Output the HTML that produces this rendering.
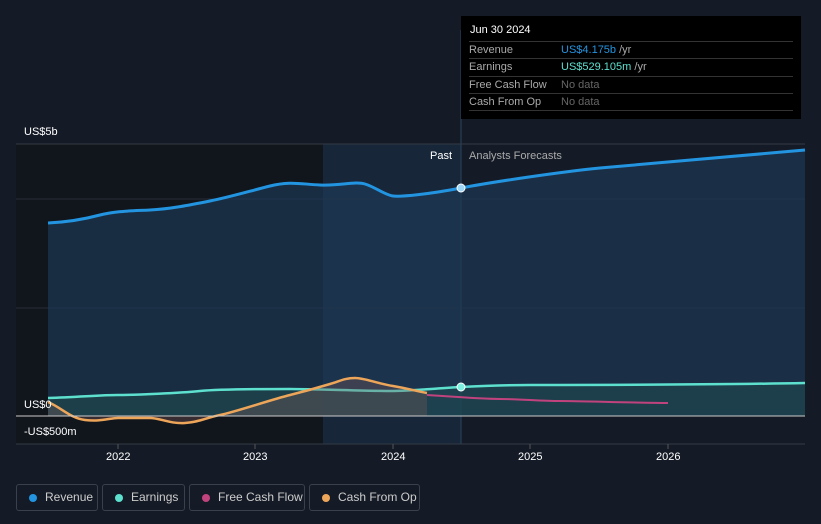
<!DOCTYPE html><html><head><style>
html,body{margin:0;width:821px;height:524px;overflow:hidden}
body{background:#151b26;font-family:"Liberation Sans",sans-serif;position:relative}
.t{position:absolute;font-size:11px;color:#fff}
.tip{position:absolute;left:461px;top:16px;width:340px;height:103px;background:#000}
.row{position:absolute;left:8px;width:324px;border-top:1px solid #333;font-size:11px;color:#aaa;height:17px;line-height:17px}
.row span{position:absolute;left:92px}
.leg{position:absolute;top:484px;height:27px;border:1px solid #3a404c;border-radius:3px;font-size:12px;color:#ccc;line-height:25px;box-sizing:border-box;padding-left:28px;white-space:nowrap}
.leg i{position:absolute;left:12px;top:9px;width:8px;height:8px;border-radius:50%}
</style></head><body>
<svg width="821" height="524" style="position:absolute;left:0;top:0">
<rect x="16" y="144" width="307" height="300" fill="#11151c"/>
<rect x="323" y="144" width="138" height="300" fill="#172638"/>
<line x1="461" y1="30" x2="461" y2="444" stroke="#2a4460"/>
<line x1="16" y1="144" x2="805" y2="144" stroke="#333a45"/>
<line x1="16" y1="199" x2="805" y2="199" stroke="#262d38"/>
<line x1="16" y1="308" x2="805" y2="308" stroke="#262d38"/>
<line x1="16" y1="444" x2="805" y2="444" stroke="#333a45"/>
<path d="M48,223 C70,222 85,219 100,215 S130,211 150,210 S190,205 210,201 S250,191 270,186 S300,184 320,185 S355,181 365,184 S385,195 393,196 S430,194 461,188 S560,172 600,168 S700,159 805,150 L805,416 L48,416Z" fill="#1d3a57" opacity="0.65"/>
<path d="M48,223 C70,222 85,219 100,215 S130,211 150,210 S190,205 210,201 S250,191 270,186 S300,184 320,185 S355,181 365,184 S385,195 393,196 S430,194 461,188 S560,172 600,168 S700,159 805,150" fill="none" stroke="#2394e0" stroke-width="3"/>
<path d="M48,398 C80,397 100,395 118,395 S180,393 200,391 S270,389 290,389 S370,391 390,391 S440,388 461,387 S510,385 530,385 S700,385 805,383 L805,416 L48,416Z" fill="#1f4b50" opacity="0.6"/>
<path d="M48,398 C80,397 100,395 118,395 S180,393 200,391 S270,389 290,389 S370,391 390,391 S440,388 461,387 S510,385 530,385 S700,385 805,383" fill="none" stroke="#5ee0cf" stroke-width="2.5"/>
<path d="M427,395 C460,397 480,399 500,399 S540,401 560,401 S640,403 668,403" fill="none" stroke="#c0437e" stroke-width="2"/>
<path d="M48,402 C62,408 70,418 85,420 S110,418 118,418 S140,418 150,418 S170,424 185,423 S205,418 220,415 S270,400 290,395 S320,387 330,384 S345,378 355,378 S375,383 393,386 S415,391 427,393 L427,416 L48,416Z" fill="#7a5a5a" opacity="0.35"/>
<path d="M48,402 C62,408 70,418 85,420 S110,418 118,418 S140,418 150,418 S170,424 185,423 S205,418 220,415 S270,400 290,395 S320,387 330,384 S345,378 355,378 S375,383 393,386 S415,391 427,393" fill="none" stroke="#eda55a" stroke-width="2.5"/>
<line x1="16" y1="416" x2="805" y2="416" stroke="#ccc" stroke-width="1"/>
<circle cx="461" cy="188" r="4" fill="#9fd6f5" stroke="#fff"/>
<circle cx="461" cy="387" r="4" fill="#7ef0df" stroke="#fff"/>
<line x1="118" y1="444" x2="118" y2="449" stroke="#555"/><line x1="255" y1="444" x2="255" y2="449" stroke="#555"/><line x1="393" y1="444" x2="393" y2="449" stroke="#555"/><line x1="530" y1="444" x2="530" y2="449" stroke="#555"/><line x1="668" y1="444" x2="668" y2="449" stroke="#555"/>
</svg>
<div class="t" style="left:24px;top:126px">US$5b</div>
<div class="t" style="left:24px;top:399px">US$0</div>
<div class="t" style="left:24px;top:426px">-US$500m</div>
<div class="t" style="left:430px;top:150px">Past</div>
<div class="t" style="left:469px;top:150px;color:#aaa">Analysts Forecasts</div>
<div class="t" style="left:106px;top:451px">2022</div><div class="t" style="left:243px;top:451px">2023</div><div class="t" style="left:381px;top:451px">2024</div><div class="t" style="left:518px;top:451px">2025</div><div class="t" style="left:656px;top:451px">2026</div>
<div class="tip">
<div style="position:absolute;left:9px;top:8px;font-size:11px;color:#fff">Jun 30 2024</div>
<div class="row" style="top:25px">Revenue<span style="color:#2394e0">US$4.175b <b style="font-weight:normal;color:#aaa">/yr</b></span></div>
<div class="row" style="top:42px">Earnings<span style="color:#5ee0cf">US$529.105m <b style="font-weight:normal;color:#aaa">/yr</b></span></div>
<div class="row" style="top:60px">Free Cash Flow<span style="color:#666">No data</span></div>
<div class="row" style="top:77px">Cash From Op<span style="color:#666">No data</span></div>
<div class="row" style="top:94px;height:0"></div>
</div>
<div class="leg" style="left:16px;width:82px"><i style="background:#2394e0"></i>Revenue</div>
<div class="leg" style="left:102px;width:83px"><i style="background:#5ee0cf"></i>Earnings</div>
<div class="leg" style="left:189px;width:116px"><i style="background:#c0437e"></i>Free Cash Flow</div>
<div class="leg" style="left:309px;width:111px"><i style="background:#eda55a"></i>Cash From Op</div>
</body></html>
